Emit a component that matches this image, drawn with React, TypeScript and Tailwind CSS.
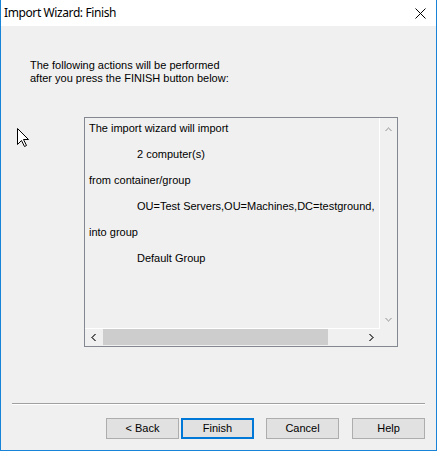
import React from "react";

function ChevronUp({ color }: { color: string }) {
  return (
    <svg width="7" height="4" viewBox="0 0 7 4" shapeRendering="crispEdges">
      <rect x="3" y="0" width="1" height="1" fill={color} />
      <rect x="2" y="1" width="3" height="1" fill={color} />
      <rect x="1" y="2" width="2" height="1" fill={color} />
      <rect x="4" y="2" width="2" height="1" fill={color} />
      <rect x="0" y="3" width="2" height="1" fill={color} />
      <rect x="5" y="3" width="2" height="1" fill={color} />
    </svg>
  );
}

function ChevronDown({ color }: { color: string }) {
  return (
    <svg width="7" height="4" viewBox="0 0 7 4" shapeRendering="crispEdges">
      <rect x="0" y="0" width="2" height="1" fill={color} />
      <rect x="5" y="0" width="2" height="1" fill={color} />
      <rect x="1" y="1" width="2" height="1" fill={color} />
      <rect x="4" y="1" width="2" height="1" fill={color} />
      <rect x="2" y="2" width="3" height="1" fill={color} />
      <rect x="3" y="3" width="1" height="1" fill={color} />
    </svg>
  );
}

function ChevronLeft({ color }: { color: string }) {
  return (
    <svg width="5" height="7" viewBox="0 0 5 7" shapeRendering="crispEdges">
      <rect x="3" y="0" width="2" height="1" fill={color} />
      <rect x="2" y="1" width="2" height="1" fill={color} />
      <rect x="1" y="2" width="2" height="1" fill={color} />
      <rect x="0" y="3" width="2" height="1" fill={color} />
      <rect x="1" y="4" width="2" height="1" fill={color} />
      <rect x="2" y="5" width="2" height="1" fill={color} />
      <rect x="3" y="6" width="2" height="1" fill={color} />
    </svg>
  );
}

function ChevronRight({ color }: { color: string }) {
  return (
    <svg width="5" height="7" viewBox="0 0 5 7" shapeRendering="crispEdges">
      <rect x="0" y="0" width="2" height="1" fill={color} />
      <rect x="1" y="1" width="2" height="1" fill={color} />
      <rect x="2" y="2" width="2" height="1" fill={color} />
      <rect x="3" y="3" width="2" height="1" fill={color} />
      <rect x="2" y="4" width="2" height="1" fill={color} />
      <rect x="1" y="5" width="2" height="1" fill={color} />
      <rect x="0" y="6" width="2" height="1" fill={color} />
    </svg>
  );
}

function Btn({ label, primary }: { label: string; primary?: boolean }) {
  return (
    <div
      className={
        "w-[73px] h-[21px] flex items-center justify-center bg-[#e1e1e1] leading-[13px] " +
        (primary ? "border-2 border-[#0078d7]" : "border border-[#adadad]")
      }
    >
      {label}
    </div>
  );
}

export default function App() {
  return (
    <div className="w-[437px] h-[451px] relative flex flex-col border-x border-b border-[#1883d7] bg-[#f0f0f0] overflow-hidden text-[11px] text-black font-['Liberation_Sans',Arial,sans-serif]">
      {/* title bar */}
      <div className="h-[26px] shrink-0 bg-white flex items-start justify-between pl-[3px] pr-[10px]">
        <span className="leading-[26px] text-[12px] tracking-[-0.4px] font-['Noto_Sans',sans-serif] text-black">
          Import Wizard: Finish
        </span>
        <svg width="11" height="11" viewBox="0 0 11 11" className="mt-[8px]">
          <line x1="0.5" y1="0.5" x2="10.5" y2="10.5" stroke="#000" strokeWidth="1" />
          <line x1="10.5" y1="0.5" x2="0.5" y2="10.5" stroke="#000" strokeWidth="1" />
        </svg>
      </div>

      {/* body */}
      <div className="flex-1 flex flex-col">
        <div className="mt-[33px] ml-[29px] leading-[13px]">
          <div>The following actions will be performed</div>
          <div>after you press the FINISH button below:</div>
        </div>

        {/* read-only box */}
        <div className="ml-[83px] mt-[32px] w-[314px] h-[230px] shrink-0 border border-[#828790] flex flex-col">
          <div className="flex flex-1 min-h-0">
            <div className="flex-1 min-w-0 overflow-hidden border-r border-b border-white pl-[4px] pt-[4px] flex flex-col gap-[13px] leading-[13px] whitespace-nowrap">
              <div>The import wizard will import</div>
              <div className="pl-[48px]">2 computer(s)</div>
              <div>from container/group</div>
              <div className="pl-[48px]">OU=Test Servers,OU=Machines,DC=testground,</div>
              <div>into group</div>
              <div className="pl-[48px]">Default Group</div>
            </div>
            <div className="w-[17px] flex flex-col items-center justify-between pt-[9px] pb-[7px]">
              <ChevronUp color="#c0c0c0" />
              <ChevronDown color="#c0c0c0" />
            </div>
          </div>
          <div className="h-[17px] shrink-0 flex">
            <div className="flex-1 flex">
              <div className="w-[17px] flex items-center justify-center">
                <ChevronLeft color="#606060" />
              </div>
              <div className="flex-1 flex items-start">
                <div className="ml-[1px] w-[225px] h-[16px] bg-[#cdcdcd]" />
              </div>
              <div className="w-[17px] flex items-center justify-center">
                <ChevronRight color="#606060" />
              </div>
            </div>
            <div className="w-[17px]" />
          </div>
        </div>

        {/* separator */}
        <div className="ml-[11px] mt-[56px] w-[413px] h-[2px] shrink-0 border-t border-b border-t-[#a0a0a0] border-b-white" />

        {/* buttons */}
        <div className="mt-[13px] ml-[105px] flex">
          <Btn label="< Back" />
          <div className="ml-[2px]">
            <Btn label="Finish" primary />
          </div>
          <div className="ml-[12px]">
            <Btn label="Cancel" />
          </div>
          <div className="ml-[13px]">
            <Btn label="Help" />
          </div>
        </div>
      </div>

      {/* mouse cursor overlay */}
      <svg
        className="absolute left-[16px] top-[128px]"
        width="13"
        height="20"
        viewBox="0 0 13 20"
      >
        <path
          d="M0.5 0.5 L0.5 16.5 L4.5 12.5 L7.5 18.5 L9.5 17.5 L6.5 11.5 L11.5 11.5 Z"
          fill="#ffffff"
          stroke="#000000"
          strokeWidth="1"
        />
      </svg>
    </div>
  );
}
